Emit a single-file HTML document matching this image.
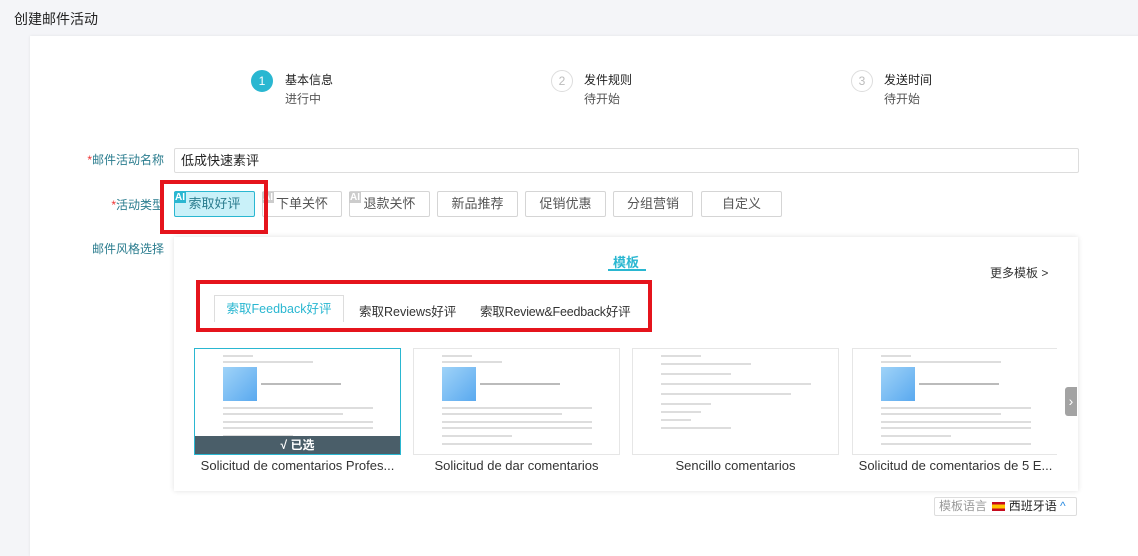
<!DOCTYPE html>
<html><head><meta charset="utf-8"><style>
*{box-sizing:border-box;margin:0;padding:0}
body{width:1138px;height:532px;overflow:hidden;background:#f4f5f8;font-family:"Liberation Sans","Noto Sans CJK SC",sans-serif;color:#333;position:relative;font-size:13px}
.abs{position:absolute}
.card{left:30px;top:36px;width:1120px;height:520px;background:#fff;box-shadow:0 0 3px rgba(0,0,0,.08)}
.circ{width:22px;height:22px;border-radius:50%;border:1px solid #ddd;color:#bbb;text-align:center;line-height:20px;font-size:12px}
.lbl{font-size:12px;color:#2a7c8e;text-align:right;width:140px}
.btn{top:191px;height:26px;border:1px solid #d5d5d5;border-radius:2px;background:#fff;text-align:center;line-height:24px;font-size:13px;color:#555}
.ai{font-size:10px;font-weight:bold;color:#fff;background:#ccc;padding:0 1px;line-height:11px}
.red{border:4px solid #e5141c}
.thumb{top:348px;width:207px;height:107px;border:1px solid #e6e6e6;background:#fff;overflow:hidden}
.ln{position:absolute;height:2px;background:#ddd}
.img{position:absolute;width:34px;height:34px;background:linear-gradient(135deg,#9fd3f8,#5aa9ef)}
.ttl{top:458px;width:207px;text-align:center;font-size:13px;color:#333;white-space:nowrap}
</style></head><body>
<div class="abs" style="left:14px;top:9px;font-size:14px;color:#222">创建邮件活动</div>
<div class="abs card"></div>

<div class="abs circ" style="left:251px;top:70px;background:#2ab7d1;border-color:#2ab7d1;color:#fff">1</div>
<div class="abs" style="left:285px;top:71px;font-size:12px;color:#222">基本信息</div>
<div class="abs" style="left:285px;top:90px;font-size:12px;color:#555">进行中</div>
<div class="abs circ" style="left:551px;top:70px">2</div>
<div class="abs" style="left:584px;top:71px;font-size:12px;color:#222">发件规则</div>
<div class="abs" style="left:584px;top:90px;font-size:12px;color:#555">待开始</div>
<div class="abs circ" style="left:851px;top:70px">3</div>
<div class="abs" style="left:884px;top:71px;font-size:12px;color:#222">发送时间</div>
<div class="abs" style="left:884px;top:90px;font-size:12px;color:#555">待开始</div>

<div class="abs lbl" style="left:24px;top:151px"><span style="color:#e33">*</span>邮件活动名称</div>
<div class="abs" style="left:174px;top:148px;width:905px;height:25px;border:1px solid #ddd;border-radius:2px;padding-left:6px;line-height:23px;font-size:13px;color:#222">低成快速素评</div>

<div class="abs lbl" style="left:24px;top:196px"><span style="color:#e33">*</span>活动类型</div>
<div class="abs btn" style="left:174px;width:81px;background:#c9f1f9;border-color:#2ab7d1;color:#2a7c8e">索取好评</div>
<div class="abs btn" style="left:262px;width:80px">下单关怀</div>
<div class="abs btn" style="left:349px;width:81px">退款关怀</div>
<div class="abs btn" style="left:437px;width:81px">新品推荐</div>
<div class="abs btn" style="left:525px;width:81px">促销优惠</div>
<div class="abs btn" style="left:613px;width:80px">分组营销</div>
<div class="abs btn" style="left:701px;width:81px">自定义</div>
<div class="abs ai" style="left:174px;top:192px;background:#2ab7d1">AI</div>
<div class="abs ai" style="left:262px;top:192px">AI</div>
<div class="abs ai" style="left:349px;top:192px">AI</div>
<div class="abs red" style="left:160px;top:180px;width:108px;height:54px"></div>

<div class="abs lbl" style="left:24px;top:240px">邮件风格选择</div>
<div class="abs" style="left:174px;top:237px;width:904px;height:254px;background:#fff;box-shadow:0 0 5px rgba(0,0,0,.12)"></div>
<div class="abs" style="left:613px;top:252px;font-size:13px;font-weight:bold;color:#2ab7d1">模板</div>
<div class="abs" style="left:608px;top:269px;width:38px;height:2px;background:#2ab7d1"></div>
<div class="abs" style="left:990px;top:264px;font-size:12px;color:#333">更多模板 &gt;</div>

<div class="abs red" style="left:196px;top:280px;width:456px;height:52px"></div>
<div class="abs" style="left:214px;top:295px;width:130px;height:27px;border:1px solid #ddd;border-bottom:none;text-align:center;line-height:26px;color:#2ab7d1;font-size:12.5px">索取Feedback好评</div>
<div class="abs" style="left:359px;top:301px;font-size:12.5px;color:#333">索取Reviews好评</div>
<div class="abs" style="left:480px;top:301px;font-size:12.5px;color:#333;letter-spacing:-0.2px">索取Review&amp;Feedback好评</div>

<div class="abs thumb" style="left:194px;border-color:#2ab7d1">
 <div class="ln" style="left:28px;top:6px;width:30px"></div><div class="ln" style="left:28px;top:12px;width:90px"></div>
 <div class="img" style="left:28px;top:18px"></div><div class="ln" style="left:66px;top:34px;width:80px;background:#bbb"></div>
 <div class="ln" style="left:28px;top:58px;width:150px"></div><div class="ln" style="left:28px;top:64px;width:120px"></div>
 <div class="ln" style="left:28px;top:72px;width:150px"></div><div class="ln" style="left:28px;top:78px;width:150px"></div>
 <div class="ln" style="left:28px;top:86px;width:70px"></div>
 <div style="position:absolute;left:0;bottom:0;width:100%;height:18px;background:#4a5e69;color:#fff;text-align:center;font-size:12px;line-height:18px;font-weight:bold">√ 已选</div>
</div>
<div class="abs thumb" style="left:413px">
 <div class="ln" style="left:28px;top:6px;width:30px"></div><div class="ln" style="left:28px;top:12px;width:60px"></div>
 <div class="img" style="left:28px;top:18px"></div><div class="ln" style="left:66px;top:34px;width:80px;background:#bbb"></div>
 <div class="ln" style="left:28px;top:58px;width:150px"></div><div class="ln" style="left:28px;top:64px;width:120px"></div>
 <div class="ln" style="left:28px;top:72px;width:150px"></div><div class="ln" style="left:28px;top:78px;width:150px"></div>
 <div class="ln" style="left:28px;top:86px;width:70px"></div><div class="ln" style="left:28px;top:94px;width:150px"></div>
</div>
<div class="abs thumb" style="left:632px">
 <div class="ln" style="left:28px;top:6px;width:40px"></div><div class="ln" style="left:28px;top:14px;width:90px"></div>
 <div class="ln" style="left:28px;top:24px;width:70px"></div><div class="ln" style="left:28px;top:34px;width:150px"></div>
 <div class="ln" style="left:28px;top:44px;width:130px"></div><div class="ln" style="left:28px;top:54px;width:50px"></div>
 <div class="ln" style="left:28px;top:62px;width:40px"></div><div class="ln" style="left:28px;top:70px;width:30px"></div><div class="ln" style="left:28px;top:78px;width:70px"></div>
</div>
<div class="abs thumb" style="left:852px;width:205px;border-right:none">
 <div class="ln" style="left:28px;top:6px;width:30px"></div><div class="ln" style="left:28px;top:12px;width:120px"></div>
 <div class="img" style="left:28px;top:18px"></div><div class="ln" style="left:66px;top:34px;width:80px;background:#bbb"></div>
 <div class="ln" style="left:28px;top:58px;width:150px"></div><div class="ln" style="left:28px;top:64px;width:120px"></div>
 <div class="ln" style="left:28px;top:72px;width:150px"></div><div class="ln" style="left:28px;top:78px;width:150px"></div>
 <div class="ln" style="left:28px;top:86px;width:70px"></div><div class="ln" style="left:28px;top:94px;width:150px"></div>
</div>
<div class="abs" style="left:1065px;top:387px;width:12px;height:29px;background:#a3a3a3;border-radius:3px 0 0 3px;color:#fff;font-size:14px;line-height:28px;text-align:center">›</div>
<div class="abs ttl" style="left:194px">Solicitud de comentarios Profes...</div>
<div class="abs ttl" style="left:413px">Solicitud de dar comentarios</div>
<div class="abs ttl" style="left:632px">Sencillo comentarios</div>
<div class="abs ttl" style="left:852px">Solicitud de comentarios de 5 E...</div>

<div class="abs" style="left:934px;top:497px;width:143px;height:19px;border:1px solid #ddd;border-radius:2px;font-size:12px;line-height:17px;padding-left:4px;color:#999;white-space:nowrap">模板语言 <span style="display:inline-block;width:13px;height:9px;background:linear-gradient(#c60b1e 25%,#ffc400 25%,#ffc400 75%,#c60b1e 75%);vertical-align:-1px;margin-left:2px"></span> <span style="color:#222">西班牙语</span> <span style="color:#2a8ae0">^</span></div>
</body></html>
